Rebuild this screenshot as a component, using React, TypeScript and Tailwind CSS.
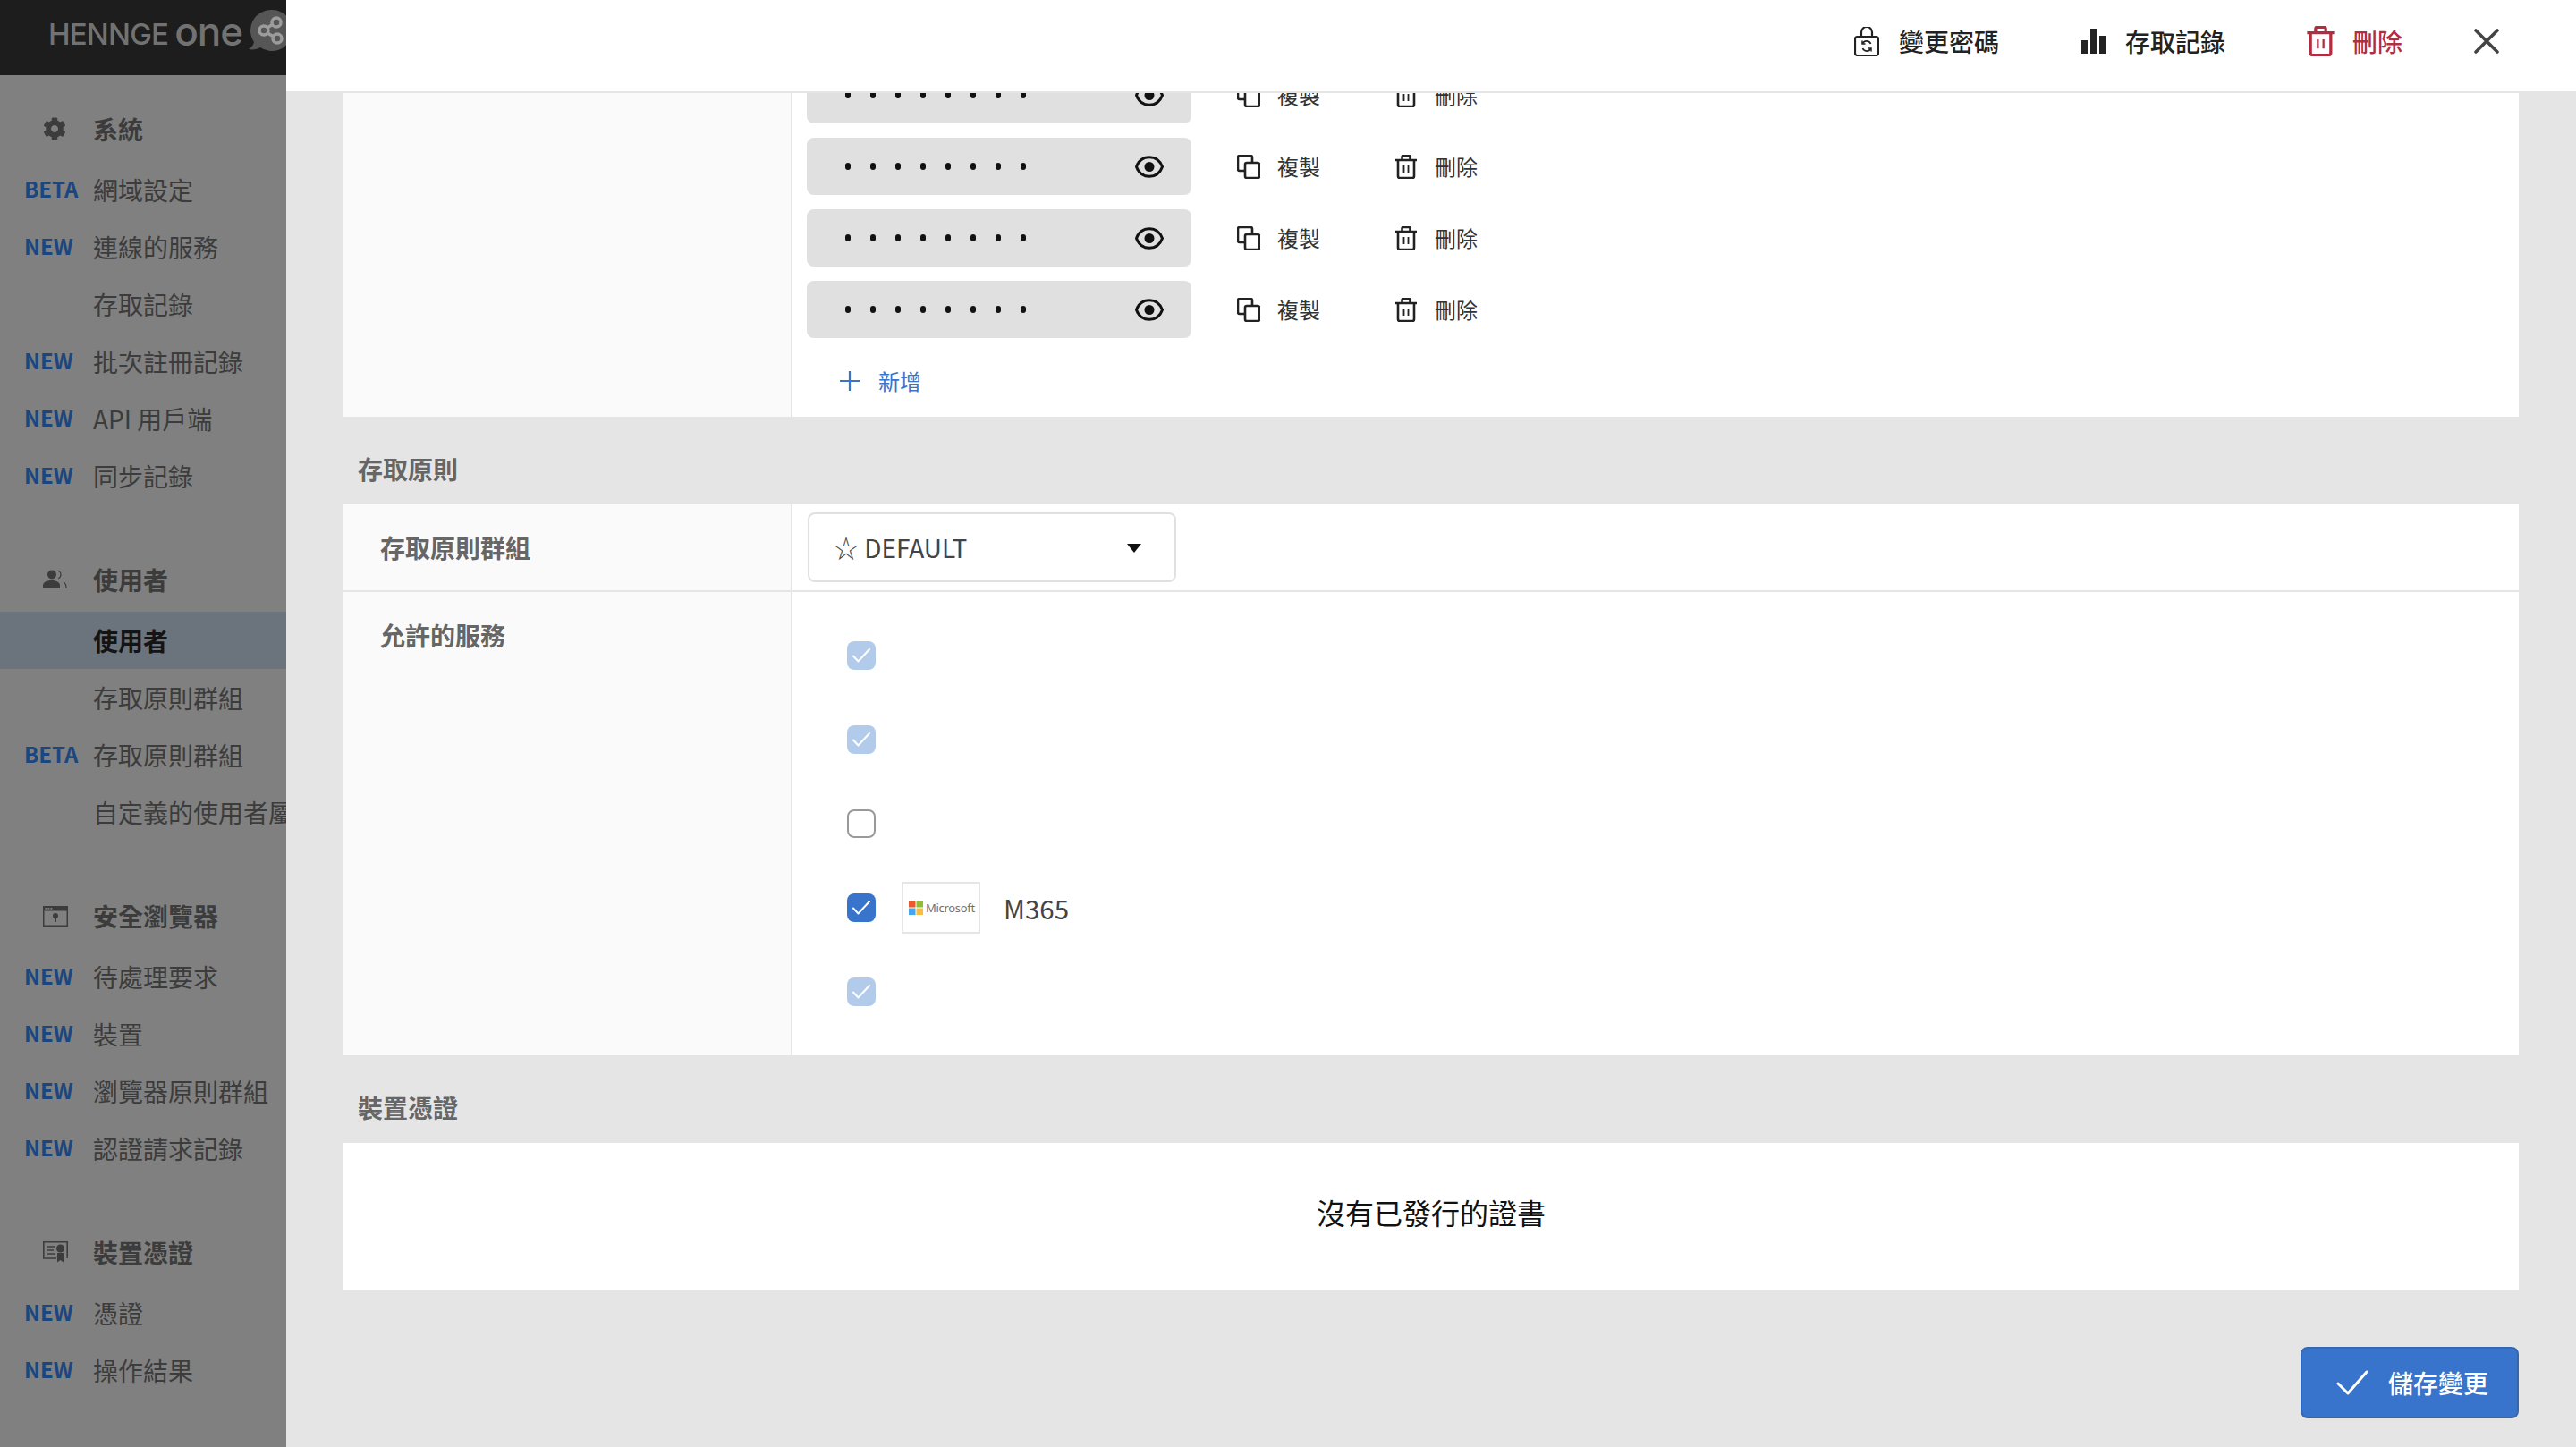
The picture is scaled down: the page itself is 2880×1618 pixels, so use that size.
import { FaCog } from "react-icons/fa";

type NavItem = { badge?: "NEW" | "BETA"; label: string; active?: boolean };
type NavGroup = { icon: React.ReactNode; title: string; items: NavItem[] };

function UsersIcon() {
    return (
        <svg viewBox="0 0 27 22" className="w-[27px] h-[22px]" fill="currentColor">
            <circle cx="10" cy="5.5" r="5" />
            <path d="M0 21v-3.5c0-3 3-5.5 9.5-5.5s9.500 2.500 9.500 5.500V21z" />
            <path d="M16.500 1c2.500.8 3.500 2.500 3.500 4.500s-1 3.500-3 4.500" fill="none" stroke="currentColor" strokeWidth="1.200" />
            <path d="M23 14c2 1 3 2.500 3.200 7" fill="none" stroke="currentColor" strokeWidth="1.200" />
        </svg>
    );
}

function BrowserIcon() {
    return (
        <svg viewBox="0 0 28 23" className="w-[28px] h-[23px]" fill="currentColor">
            <path d="M0 0h28v23H0z M1.500 5.500V21.500h25V5.500z" fillRule="evenodd" />
            <rect x="2.500" y="2" width="1.800" height="1.800" fill="#808080" />
            <rect x="5.500" y="2" width="1.800" height="1.800" fill="#808080" />
            <rect x="8.500" y="2" width="1.800" height="1.800" fill="#808080" />
            <circle cx="14" cy="11" r="3" />
            <rect x="13" y="12" width="2" height="6" />
        </svg>
    );
}

function CertIcon() {
    return (
        <svg viewBox="0 0 28 24" className="w-[28px] h-[24px]" fill="none" stroke="currentColor">
            <path d="M15 19H.8V.8h26.400V19" strokeWidth="1.600" />
            <path d="M5 6h9M5 10h7M5 14h9" strokeWidth="1.600" />
            <circle cx="19.500" cy="8" r="4.500" fill="currentColor" stroke="none" />
            <path d="M16 13h7v10.500l-3.500-2.500-3.500 2.500z" fill="currentColor" stroke="none" />
        </svg>
    );
}

function EyeIcon() {
    return (
        <svg viewBox="0 0 32 25" className="w-[32px] h-[25px]">
            <path d="M1.500 12.500C4 5.500 9.500 1.700 16 1.700S28 5.500 30.500 12.500C28 19.500 22.500 23.300 16 23.300S4 19.500 1.500 12.500z" fill="none" stroke="#111" strokeWidth="3" />
            <circle cx="16" cy="12.500" r="5.500" fill="#111" />
        </svg>
    );
}

function CopyIcon() {
    return (
        <svg viewBox="0 0 26 27" className="w-[26px] h-[27px] shrink-0" fill="none" stroke="#222" strokeWidth="2.600" strokeLinejoin="round">
            <path d="M9 18H3a2 2 0 0 1-2-2V3a2 2 0 0 1 2-2h12a2 2 0 0 1 2 2v6" />
            <rect x="9" y="9" width="16" height="17" rx="2" />
        </svg>
    );
}

function TrashIcon({ className, color }: { className: string; color: string }) {
    return (
        <svg viewBox="0 0 26 27" className={className} fill="none" stroke={color} strokeWidth="2.600" strokeLinejoin="round">
            <path d="M1 6h24M8.500 6V2.500a1.500 1.500 0 0 1 1.500-1.500h6a1.500 1.500 0 0 1 1.500 1.500V6" />
            <path d="M4 6v18a2 2 0 0 0 2 2h14a2 2 0 0 0 2-2V6" />
            <path d="M10.500 12v8M15.500 12v8" strokeWidth="1.800" />
        </svg>
    );
}

function LockIcon() {
    return (
        <svg viewBox="0 0 28 33" className="w-[28px] h-[33px]" fill="none" stroke="#222" strokeWidth="2.200">
            <path d="M8 11V6a6 6 0 0 1 12 0v5" />
            <rect x="1" y="11" width="26" height="21" rx="2.500" />
            <path d="M18.500 19a5 5 0 0 0-9-.5M9.500 24a5 5 0 0 0 9 .5" strokeWidth="1.800" />
            <path d="M9 15.500v3.500h3.500M19 27.500V24h-3.500" strokeWidth="1.500" />
        </svg>
    );
}

function CheckBox({ state }: { state: "on" | "off" | "disabled" }) {
    if (state === "off") {
        return <div className="w-[32px] h-[32px] rounded-lg border-2 border-[#999999] bg-white shrink-0" />;
    }
    return (
        <div className={state === "on" ? "w-[32px] h-[32px] rounded-lg bg-[#3874cb] flex items-center justify-center shrink-0" : "w-[32px] h-[32px] rounded-lg bg-[#b3cbeb] flex items-center justify-center shrink-0"}>
            <svg viewBox="0 0 20 16" className="w-[20px] h-[16px]" fill="none" stroke="#fff" strokeWidth="2" strokeLinecap="round" strokeLinejoin="round">
                <path d="M1 8.500l5.500 6L19 1" />
            </svg>
        </div>
    );
}

const groups: NavGroup[] = [
    {
        icon: <FaCog className="w-[26px] h-[26px]" />,
        title: "系統",
        items: [
            { badge: "BETA", label: "網域設定" },
            { badge: "NEW", label: "連線的服務" },
            { label: "存取記錄" },
            { badge: "NEW", label: "批次註冊記錄" },
            { badge: "NEW", label: "API 用戶端" },
            { badge: "NEW", label: "同步記錄" },
        ],
    },
    {
        icon: <UsersIcon />,
        title: "使用者",
        items: [
            { label: "使用者", active: true },
            { label: "存取原則群組" },
            { badge: "BETA", label: "存取原則群組" },
            { label: "自定義的使用者屬性" },
        ],
    },
    {
        icon: <BrowserIcon />,
        title: "安全瀏覽器",
        items: [
            { badge: "NEW", label: "待處理要求" },
            { badge: "NEW", label: "裝置" },
            { badge: "NEW", label: "瀏覽器原則群組" },
            { badge: "NEW", label: "認證請求記錄" },
        ],
    },
    {
        icon: <CertIcon />,
        title: "裝置憑證",
        items: [
            { badge: "NEW", label: "憑證" },
            { badge: "NEW", label: "操作結果" },
        ],
    },
];

function Sidebar() {
    return (
        <aside className="w-[320px] shrink-0 h-full bg-[#808080] overflow-hidden text-[28px] text-[#3c3c3c]">
            <div className="h-[84px] bg-[#1d1d1d] flex items-center pl-[54px] pb-[8px] whitespace-nowrap overflow-hidden">
                <span className="font-['Inter',sans-serif] font-medium text-[33px] tracking-[-0.8px] text-[#727272] leading-none">HENNGE</span>
                <span className="font-['Inter',sans-serif] font-medium text-[44px] tracking-[-1px] text-[#727272] leading-none ml-[7px] -mt-[6px]">one</span>
                <svg viewBox="0 0 50 50" className="w-[50px] h-[50px] ml-[6px] -mt-[6px] shrink-0">
                    <path d="M27 1a23 23 0 1 1-13 42c-3 2-8 3-13 2 3-2 5-4 6-8A23 23 0 0 1 27 1z" fill="#565656" />
                    <g fill="none" stroke="#9c9c9c" strokeWidth="3.500">
                        <circle cx="18" cy="24" r="5" />
                        <circle cx="32" cy="15" r="5" />
                        <circle cx="33" cy="33" r="5" />
                        <path d="M22 21l6-4M22 27l7 4" />
                    </g>
                </svg>
            </div>
            <nav className="pt-[28px] flex flex-col gap-[52px]">
                {groups.map((group) => (
                    <div key={group.title}>
                        <div className="h-[64px] mb-[4px] flex items-center font-bold">
                            <div className="w-[104px] pl-[48px] shrink-0 flex items-center">{group.icon}</div>
                            <span>{group.title}</span>
                        </div>
                        {group.items.map((item, i) => (
                            <div key={i} className={item.active ? "h-[64px] flex items-center bg-[#6b737c] text-[#141414] font-bold" : "h-[64px] flex items-center"}>
                                <div className="w-[104px] pl-[27px] pb-[2px] shrink-0 font-bold text-[24px] text-[#1c4680]">{item.badge}</div>
                                <span className="whitespace-nowrap">{item.label}</span>
                            </div>
                        ))}
                    </div>
                ))}
            </nav>
        </aside>
    );
}

function TopBar() {
    return (
        <header className="h-[104px] shrink-0 bg-white border-b-2 border-[#e5e5e5] flex items-center justify-end pr-[86px] pb-[10px] text-[28px] font-medium text-[#222222]">
            <LockIcon />
            <span className="ml-[22px]">變更密碼</span>
            <svg viewBox="0 0 27 28" className="w-[27px] h-[28px] ml-[92px]" fill="#222">
                <rect x="0" y="13" width="7" height="15" />
                <rect x="10" y="0" width="7" height="28" />
                <rect x="20" y="8" width="7" height="20" />
            </svg>
            <span className="ml-[22px]">存取記錄</span>
            <TrashIcon className="w-[33px] h-[34px] ml-[90px]" color="#b22d3f" />
            <span className="ml-[19px] text-[#b22d3f]">刪除</span>
            <svg viewBox="0 0 28 28" className="w-[28px] h-[28px] ml-[80px]" fill="none" stroke="#444" strokeWidth="3.600" strokeLinecap="round">
                <path d="M2 2l24 24M26 2L2 26" />
            </svg>
        </header>
    );
}

function SecretRow() {
    return (
        <div className="flex items-center">
            <div className="w-[430px] h-[64px] rounded-lg bg-[#e0e0e0] flex items-center pl-[43px] pr-[31px] shrink-0">
                <div className="flex gap-[22px] flex-1">
                    {[0, 1, 2, 3, 4, 5, 6, 7].map((n) => (
                        <span key={n} className="w-[6px] h-[8px] rounded-full bg-[#111111]" />
                    ))}
                </div>
                <EyeIcon />
            </div>
            <div className="w-[176px] ml-[51px] flex items-center gap-[19px] text-[24px] text-[#333333]">
                <CopyIcon />
                <span>複製</span>
            </div>
            <div className="flex items-center gap-[19px] text-[24px] text-[#333333]">
                <TrashIcon className="w-[26px] h-[27px]" color="#222" />
                <span>刪除</span>
            </div>
        </div>
    );
}

function SectionTitle({ children }: { children: React.ReactNode }) {
    return <div className="h-[98px] pt-[18px] pl-[16px] flex items-center text-[28px] font-bold text-[#666666]">{children}</div>;
}

function Main() {
    const services: ("on" | "off" | "disabled")[] = ["disabled", "disabled", "off", "on", "disabled"];

    return (
        <main className="flex-1 h-full flex flex-col bg-[#e5e5e5] overflow-hidden">
            <TopBar />
            <div className="flex-1 overflow-hidden px-[64px]">
                <div className="-mt-[30px]">
                    {/* secrets card, already scrolled past its top */}
                    <div className="flex bg-white">
                        <div className="w-[502px] shrink-0 bg-[#fafafa] border-r-2 border-[#e5e5e5]" />
                        <div className="pl-[16px] pb-[8px] flex flex-col gap-[16px]">
                            <SecretRow />
                            <SecretRow />
                            <SecretRow />
                            <SecretRow />
                            <div className="h-[64px] pl-[37px] flex items-center text-[24px] text-[#3874cb]">
                                <svg viewBox="0 0 22 22" className="w-[22px] h-[22px]" fill="none" stroke="#3874cb" strokeWidth="2.200">
                                    <path d="M11 0v22M0 11h22" />
                                </svg>
                                <span className="ml-[21px]">新增</span>
                            </div>
                        </div>
                    </div>

                    <SectionTitle>存取原則</SectionTitle>
                    <div className="bg-white">
                        <div className="flex h-[98px] border-b-2 border-[#e5e5e5]">
                            <div className="w-[502px] shrink-0 bg-[#fafafa] border-r-2 border-[#e5e5e5] pl-[41px] flex items-center text-[28px] font-bold text-[#666666]">存取原則群組</div>
                            <div className="pl-[17px] flex items-center">
                                <div className="w-[412px] h-[78px] rounded-lg border-2 border-[#e0e0e0] pl-[27px] pr-[37px] flex items-center justify-between text-[28px] text-[#444444]">
                                    <span>☆ DEFAULT</span>
                                    <svg viewBox="0 0 16 10" className="w-[16px] h-[10px] mt-[2px]" fill="#111">
                                        <path d="M0 0h16L8 10z" />
                                    </svg>
                                </div>
                            </div>
                        </div>
                        <div className="flex">
                            <div className="w-[502px] shrink-0 bg-[#fafafa] border-r-2 border-[#e5e5e5] pl-[41px] pt-[27px] text-[28px] font-bold text-[#666666]">允許的服務</div>
                            <div className="py-[24px] pl-[61px]">
                                {services.map((state, i) => (
                                    <div key={i} className="h-[94px] flex items-center">
                                        <CheckBox state={state} />
                                        {i === 3 && (
                                            <>
                                                <div className="ml-[29px] w-[88px] h-[58px] border-2 border-[#e5e5e5] flex items-center pl-[6px] gap-[3px]">
                                                    <svg viewBox="0 0 16 16" className="w-[16px] h-[16px] shrink-0">
                                                        <rect x="0" y="0" width="7.500" height="7.500" fill="#e85a2e" />
                                                        <rect x="8.500" y="0" width="7.500" height="7.500" fill="#8fbf2e" />
                                                        <rect x="0" y="8.500" width="7.500" height="7.500" fill="#45a6ee" />
                                                        <rect x="8.500" y="8.500" width="7.500" height="7.500" fill="#fabd3f" />
                                                    </svg>
                                                    <span className="font-['Noto_Sans',sans-serif] text-[13px] tracking-[-0.3px] text-[#737373] leading-none">Microsoft</span>
                                                </div>
                                                <span className="ml-[26px] text-[29.500px] text-[#444444]">M365</span>
                                            </>
                                        )}
                                    </div>
                                ))}
                            </div>
                        </div>
                    </div>

                    <SectionTitle>裝置憑證</SectionTitle>
                    <div className="h-[164px] bg-white flex items-center justify-center pb-[11px] text-[32px] text-[#111111]">沒有已發行的證書</div>

                    <div className="flex justify-end mt-[64px]">
                        <button className="w-[244px] h-[80px] rounded-lg bg-[#3874cb] border-2 border-[#3566b0] flex items-center pl-[38px] text-[28px] font-medium text-white">
                            <svg viewBox="0 0 36 28" className="w-[36px] h-[28px]" fill="none" stroke="#fff" strokeWidth="3" strokeLinecap="round" strokeLinejoin="round">
                                <path d="M2 15l11 11L34 2" />
                            </svg>
                            <span className="ml-[22px]">儲存變更</span>
                        </button>
                    </div>
                </div>
            </div>
        </main>
    );
}

export default function App() {
    return (
        <div className="w-[2880px] h-[1618px] flex overflow-hidden font-['Noto_Sans_CJK_TC','Noto_Sans',sans-serif]">
            <Sidebar />
            <Main />
        </div>
    );
}
